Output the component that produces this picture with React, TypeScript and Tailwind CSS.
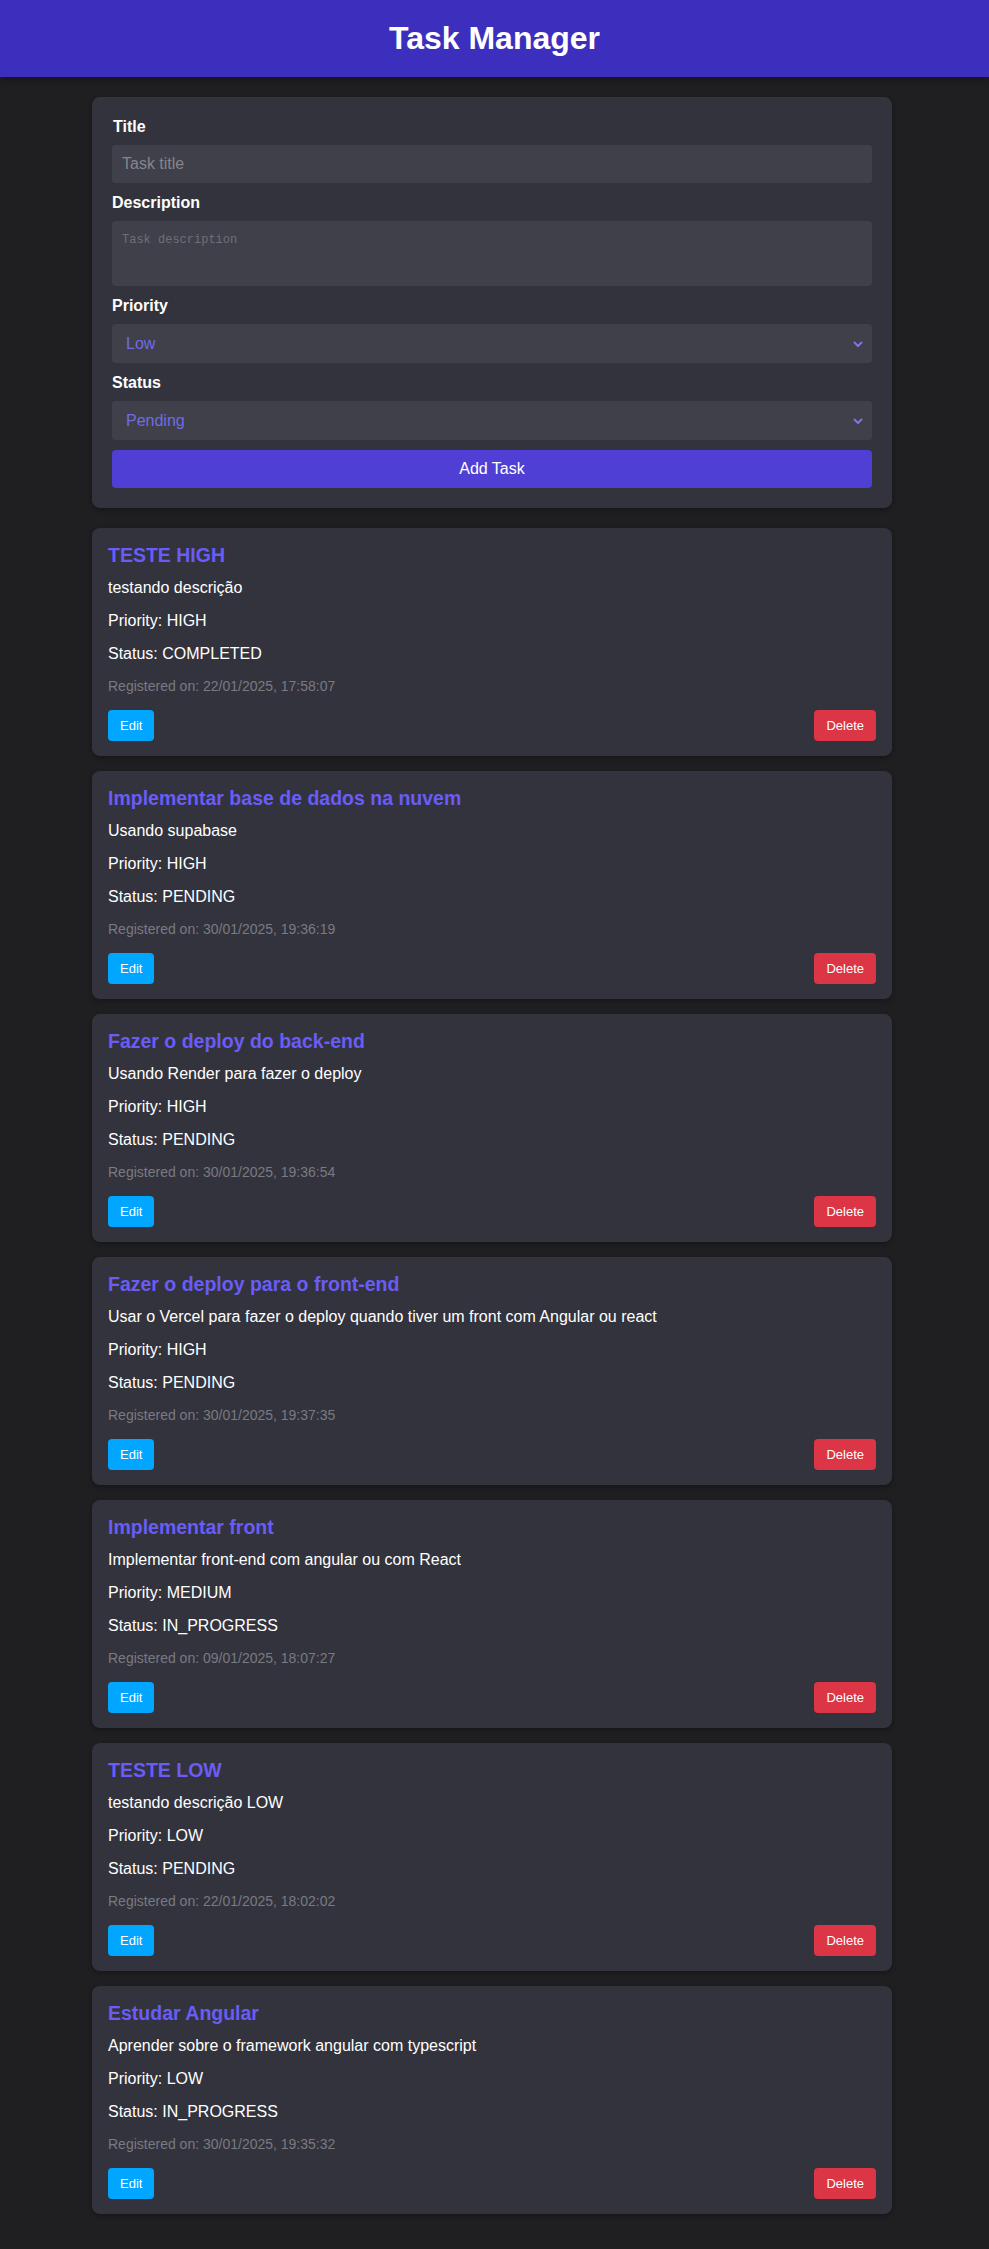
import { useState } from 'react';

type Task = {
  id: number;
  title: string;
  description: string;
  priority: string;
  status: string;
  createdAt: string;
};

const initialTasks: Task[] = [
  { id: 1, title: 'TESTE HIGH', description: 'testando descrição', priority: 'HIGH', status: 'COMPLETED', createdAt: '22/01/2025, 17:58:07' },
  { id: 2, title: 'Implementar base de dados na nuvem', description: 'Usando supabase', priority: 'HIGH', status: 'PENDING', createdAt: '30/01/2025, 19:36:19' },
  { id: 3, title: 'Fazer o deploy do back-end', description: 'Usando Render para fazer o deploy', priority: 'HIGH', status: 'PENDING', createdAt: '30/01/2025, 19:36:54' },
  { id: 4, title: 'Fazer o deploy para o front-end', description: 'Usar o Vercel para fazer o deploy quando tiver um front com Angular ou react', priority: 'HIGH', status: 'PENDING', createdAt: '30/01/2025, 19:37:35' },
  { id: 5, title: 'Implementar front', description: 'Implementar front-end com angular ou com React', priority: 'MEDIUM', status: 'IN_PROGRESS', createdAt: '09/01/2025, 18:07:27' },
  { id: 6, title: 'TESTE LOW', description: 'testando descrição LOW', priority: 'LOW', status: 'PENDING', createdAt: '22/01/2025, 18:02:02' },
  { id: 7, title: 'Estudar Angular', description: 'Aprender sobre o framework angular com typescript', priority: 'LOW', status: 'IN_PROGRESS', createdAt: '30/01/2025, 19:35:32' },
];

function Chevron() {
  return (
    <svg
      className="pointer-events-none absolute right-[9px] top-1/2 -translate-y-1/2"
      width="10"
      height="7"
      viewBox="0 0 10 7"
      fill="none"
    >
      <path d="M1 1.5 L5 5.5 L9 1.5" stroke="#7b78e6" strokeWidth="2" />
    </svg>
  );
}

function SelectField({ value, onChange, options }: { value: string; onChange: (v: string) => void; options: [string, string][] }) {
  return (
    <div className="relative">
      <select
        value={value}
        onChange={(e) => onChange(e.target.value)}
        className="h-[39px] w-full appearance-none rounded-[4px] bg-[#40404a] px-[14px] text-[16px] text-[#6f6ce6] outline-none"
      >
        {options.map(([v, label]) => (
          <option key={v} value={v}>
            {label}
          </option>
        ))}
      </select>
      <Chevron />
    </div>
  );
}

function TaskCard({ task, onDelete }: { task: Task; onDelete: (id: number) => void }) {
  return (
    <div className="rounded-lg bg-[#33333d] px-4 pt-4 pb-[15px] shadow-[0_2px_5px_rgba(0,0,0,0.3)]">
      <h3 className="text-[19.5px] font-bold leading-[23px] text-[#6a5cf6]">{task.title}</h3>
      <p className="mt-3 text-[16px] leading-[18px] text-white">{task.description}</p>
      <p className="mt-[15px] text-[16px] leading-[18px] text-white">Priority: {task.priority}</p>
      <p className="mt-[15px] text-[16px] leading-[18px] text-white">Status: {task.status}</p>
      <p className="mt-[15px] text-[14px] leading-[16px] text-[#7a7a80]">Registered on: {task.createdAt}</p>
      <div className="mt-4 flex items-center justify-between">
        <button className="h-[31px] rounded-[4px] bg-[#00a6ff] px-3 text-[13px] text-white">Edit</button>
        <button
          onClick={() => onDelete(task.id)}
          className="h-[31px] rounded-[4px] bg-[#dc3545] px-3 text-[13px] text-white"
        >
          Delete
        </button>
      </div>
    </div>
  );
}

export default function App() {
  const [tasks, setTasks] = useState<Task[]>(initialTasks);
  const [title, setTitle] = useState('');
  const [description, setDescription] = useState('');
  const [priority, setPriority] = useState('LOW');
  const [status, setStatus] = useState('PENDING');

  const handleAdd = () => {
    if (!title.trim()) return;
    setTasks([
      ...tasks,
      {
        id: Date.now(),
        title,
        description,
        priority,
        status,
        createdAt: new Date().toLocaleString('pt-BR'),
      },
    ]);
    setTitle('');
    setDescription('');
  };

  return (
    <div className="min-h-screen bg-[#1f1f22] pb-[35px] font-['Liberation_Sans',Arial,sans-serif]">
      {/* Header */}
      <header className="bg-[#3d2fbd] py-5 text-center shadow-[0_2px_8px_rgba(0,0,0,0.4)]">
        <h1 className="text-[32px] font-bold leading-[37px] text-white">Task Manager</h1>
      </header>

      <main className="ml-[92px] mt-5 w-[800px]">
        {/* Form */}
        <div className="rounded-lg bg-[#33333d] px-5 pt-5 pb-5 shadow-[0_2px_5px_rgba(0,0,0,0.3)]">
          <label className="block pl-px text-[16px] font-bold leading-[20px] text-white">Title</label>
          <input
            value={title}
            onChange={(e) => setTitle(e.target.value)}
            placeholder="Task title"
            className="mt-2 h-[38px] w-full rounded-[4px] bg-[#40404a] px-[10px] text-[16px] text-white outline-none placeholder:text-[#85858c]"
          />
          <label className="mt-[10px] block text-[16px] font-bold leading-[20px] text-white">Description</label>
          <textarea
            value={description}
            onChange={(e) => setDescription(e.target.value)}
            placeholder="Task description"
            className="mt-2 block h-[65px] w-full resize-none rounded-[4px] bg-[#40404a] px-[10px] py-[10px] font-['Liberation_Mono',monospace] text-[12px] text-white outline-none placeholder:text-[#6f6f76]"
          />
          <label className="mt-[10px] block text-[16px] font-bold leading-[20px] text-white">Priority</label>
          <div className="mt-2">
            <SelectField
              value={priority}
              onChange={setPriority}
              options={[
                ['LOW', 'Low'],
                ['MEDIUM', 'Medium'],
                ['HIGH', 'High'],
              ]}
            />
          </div>
          <label className="mt-[10px] block text-[16px] font-bold leading-[20px] text-white">Status</label>
          <div className="mt-2">
            <SelectField
              value={status}
              onChange={setStatus}
              options={[
                ['PENDING', 'Pending'],
                ['IN_PROGRESS', 'In Progress'],
                ['COMPLETED', 'Completed'],
              ]}
            />
          </div>
          <button
            onClick={handleAdd}
            className="mt-[10px] h-[38px] w-full rounded-[4px] bg-[#4f3fd4] text-[16px] text-white"
          >
            Add Task
          </button>
        </div>

        {/* Task list */}
        <div className="mt-5 flex flex-col gap-[15px]">
          {tasks.map((task) => (
            <TaskCard key={task.id} task={task} onDelete={(id) => setTasks(tasks.filter((t) => t.id !== id))} />
          ))}
        </div>
      </main>
    </div>
  );
}
